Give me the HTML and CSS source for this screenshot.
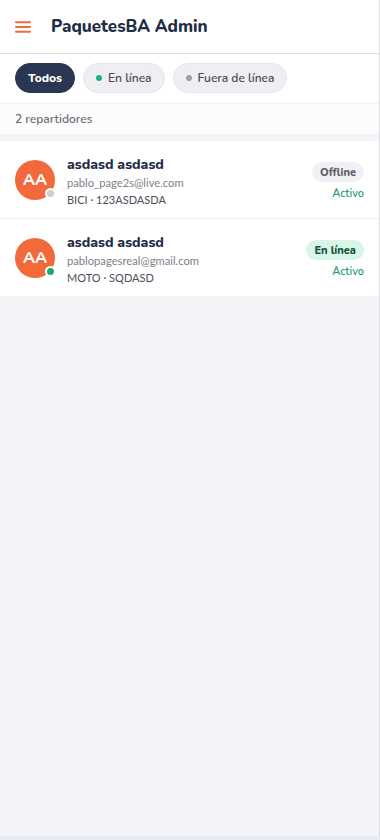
FILE: index.html
```html
<!DOCTYPE html>
<html lang="es">
<head>
<meta charset="utf-8">
<title>PaquetesBA Admin</title>
<link rel="stylesheet" href="styles.css">
</head>
<body>
<div class="app">
  <header class="topbar">
    <button class="menu" aria-label="Menú">
      <svg width="18" height="12" viewBox="0 0 18 12"><rect x="0" y="0" width="17" height="2" rx="1"/><rect x="0" y="5" width="17" height="2" rx="1"/><rect x="0" y="10" width="17" height="2" rx="1"/></svg>
    </button>
    <h1 class="title">PaquetesBA Admin</h1>
  </header>
  <nav class="filters">
    <span class="pill pill-active">Todos</span>
    <span class="pill"><i class="dot dot-green"></i>En línea</span>
    <span class="pill"><i class="dot dot-gray"></i>Fuera de línea</span>
  </nav>
  <div class="count">2 repartidores</div>
  <ul class="list">
    <li class="row">
      <div class="avatar">AA<span class="status status-off"></span></div>
      <div class="info">
        <div class="name">asdasd asdasd</div>
        <div class="email">pablo_page2s@live.com</div>
        <div class="vehicle">BICI · 123ASDASDA</div>
      </div>
      <div class="side">
        <span class="badge badge-off">Offline</span>
        <span class="active">Activo</span>
      </div>
    </li>
    <li class="row">
      <div class="avatar">AA<span class="status status-on"></span></div>
      <div class="info">
        <div class="name">asdasd asdasd</div>
        <div class="email">pablopagesreal@gmail.com</div>
        <div class="vehicle">MOTO · SQDASD</div>
      </div>
      <div class="side">
        <span class="badge badge-on">En línea</span>
        <span class="active">Activo</span>
      </div>
    </li>
  </ul>
</div>
</body>
</html>
```
FILE: styles.css
```css
* { box-sizing: border-box; }
html, body { margin: 0; padding: 0; }
body {
  background: #e9ebf4;
  font-family: "Nunito", "Lato", "Open Sans", sans-serif;
  color: #1f2d47;
}
.app {
  width: 380px;
  height: 836px;
  background: #f4f3f7;
  border-right: 1px solid #dcdce0;
  display: flex;
  flex-direction: column;
}
.topbar {
  height: 54px;
  background: #fff;
  border-bottom: 1px solid #dedde2;
  display: flex;
  align-items: center;
  padding: 0 15px;
  gap: 19px;
}
.menu {
  border: 0;
  background: none;
  padding: 0;
  width: 17px;
  height: 12px;
  display: flex;
  fill: #f26a3b;
}
.title {
  margin: 0;
  font-size: 17px;
  font-weight: 800;
  color: #1f2d47;
}
.filters {
  background: #fff;
  display: flex;
  gap: 8px;
  padding: 9px 15px 10px;
}
.pill {
  height: 30px;
  border-radius: 15px;
  background: #efeef3;
  border: 1px solid #e7e6ec;
  color: #4a4a56;
  font-size: 12px;
  font-weight: 600;
  display: flex;
  align-items: center;
  gap: 6px;
  padding: 0 12px;
}
.pill-active {
  background: #2b3652;
  border-color: #2b3652;
  color: #fff;
  font-weight: 800;
}
.dot {
  width: 6px;
  height: 6px;
  border-radius: 50%;
  display: inline-block;
}
.dot-green { background: #1db57a; }
.dot-gray { background: #a0a0a8; }
.count {
  background: #fcfcfd;
  height: 31px;
  display: flex;
  align-items: center;
  padding: 0 15px;
  font-size: 12px;
  font-weight: 600;
  color: #6c6c76;
  border-top: 1px solid #f2f1f5;
}
.list {
  list-style: none;
  margin: 7px 0 0;
  padding: 0;
}
.row {
  background: #fff;
  height: 77px;
  display: flex;
  align-items: center;
  padding: 0 15px;
  gap: 12px;
}
.row + .row { border-top: 1px solid #efeef2; height: 78px; }
.avatar {
  position: relative;
  width: 40px;
  height: 40px;
  border-radius: 50%;
  background: #f26a3b;
  color: #fff;
  font-weight: 800;
  font-size: 16px;
  display: flex;
  align-items: center;
  justify-content: center;
  flex: none;
}
.status {
  position: absolute;
  right: -1px;
  bottom: 1px;
  width: 11px;
  height: 11px;
  border-radius: 50%;
  border: 2px solid #fff;
}
.status-off { background: #cfcfd3; }
.status-on { background: #1ca870; }
.info {
  flex: 1;
  display: flex;
  flex-direction: column;
  margin-top: 5px;
}
.name {
  font-size: 14px;
  font-weight: 800;
  color: #1f2d47;
  line-height: 18px;
}
.email {
  font-family: "Lato", "Noto Sans", sans-serif;
  font-size: 11.2px;
  color: #808088;
  line-height: 17px;
}
.vehicle {
  font-family: "Lato", "Noto Sans", sans-serif;
  font-size: 11px;
  color: #4e4e58;
  line-height: 17px;
}
.side {
  display: flex;
  flex-direction: column;
  align-items: flex-end;
  gap: 4px;
  margin-top: 4px;
}
.badge {
  height: 20px;
  border-radius: 10px;
  padding: 0 8px;
  font-size: 11px;
  font-weight: 800;
  display: flex;
  align-items: center;
}
.badge-off { background: #f1f0f5; color: #5e5e6a; }
.badge-on { background: #d8f6e8; color: #14523a; }
.active {
  font-size: 11px;
  font-weight: 600;
  color: #1f9f6b;
}
```
